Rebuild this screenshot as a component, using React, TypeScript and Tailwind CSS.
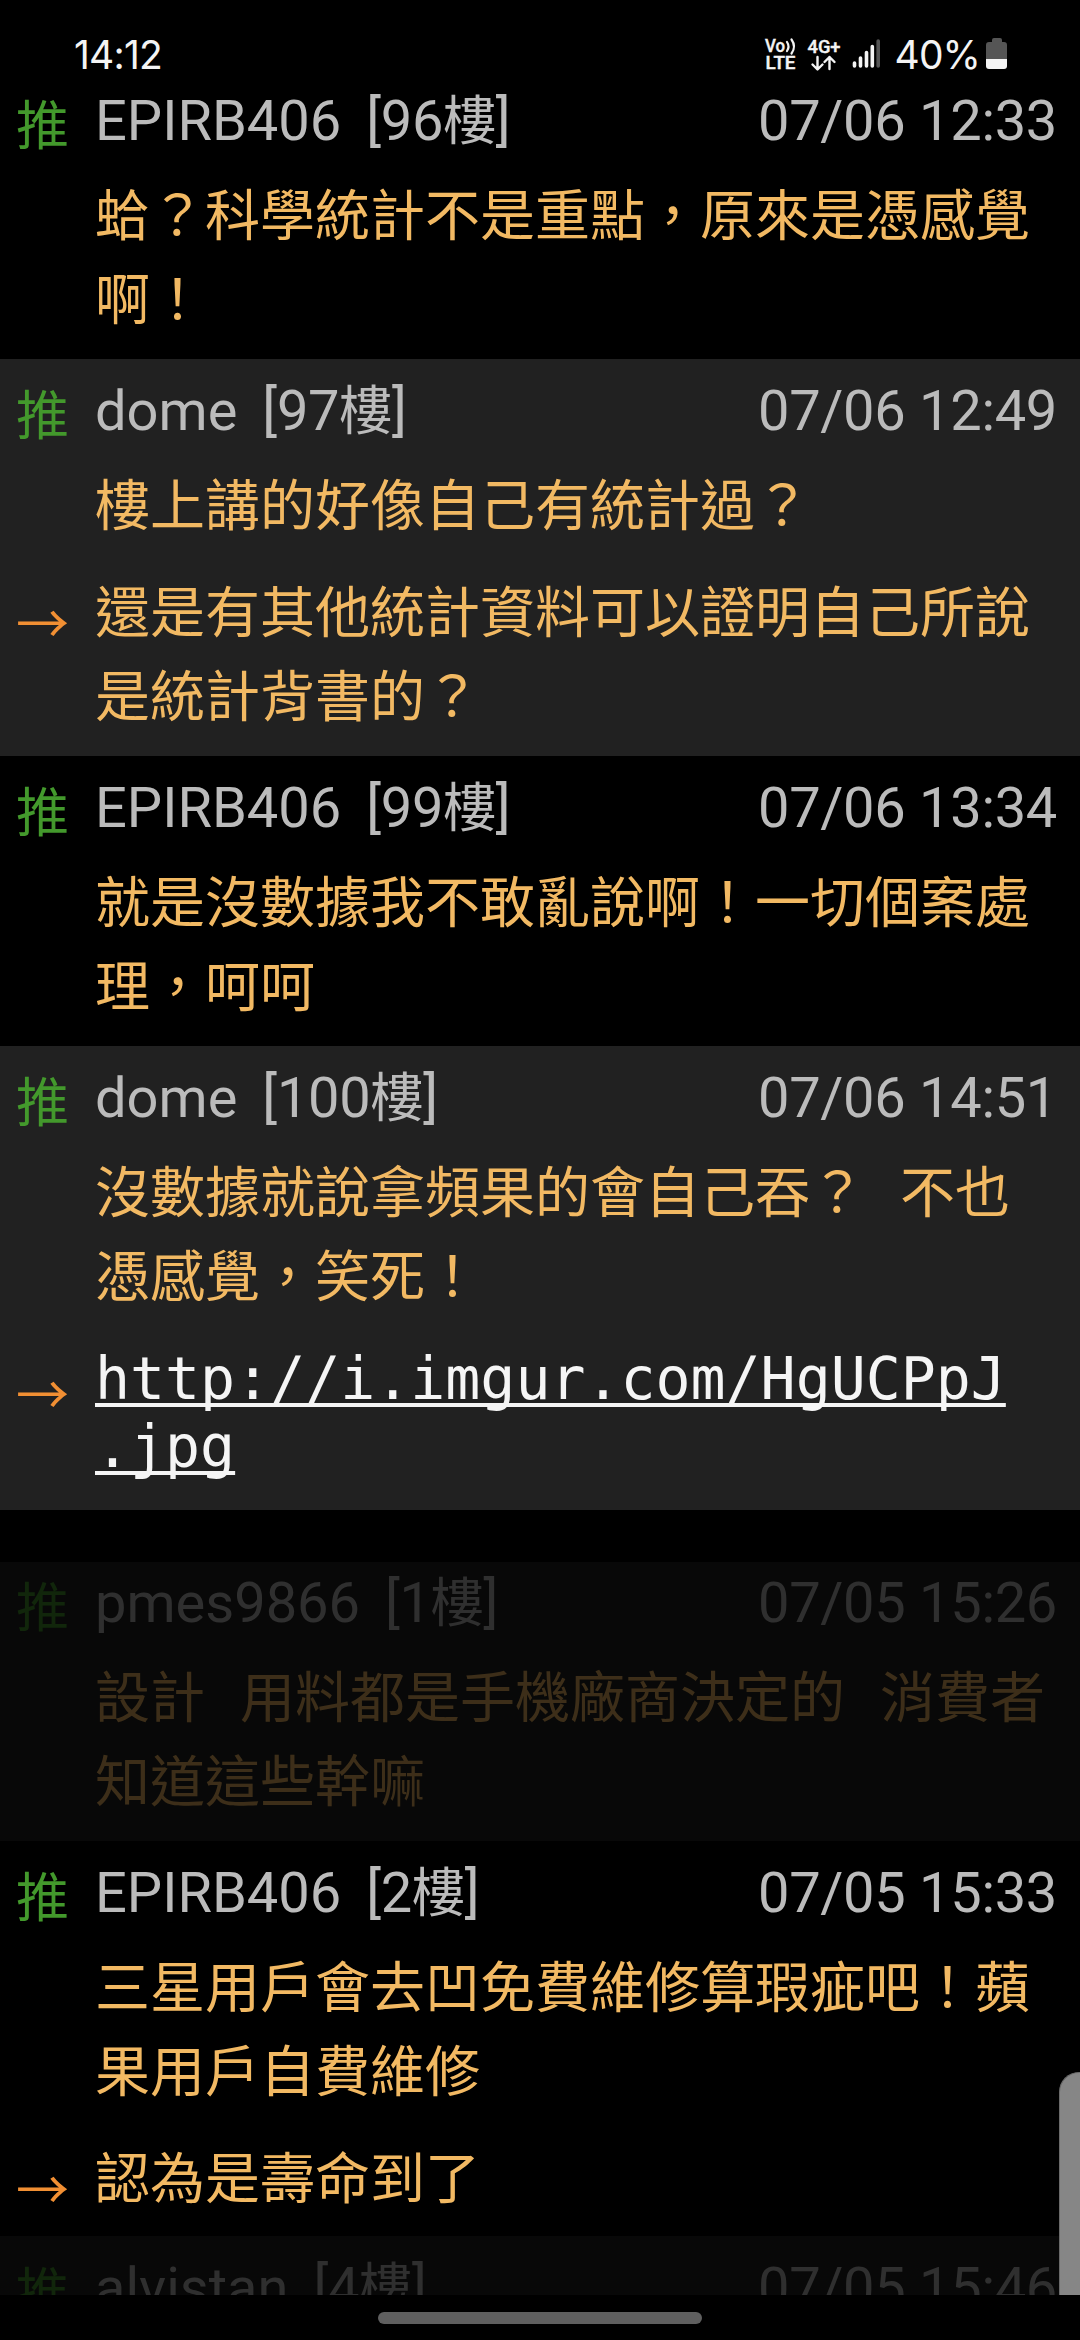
import clsx from 'clsx'

interface Message {
  lines: string[]
  link?: boolean
}

interface Comment {
  author: string
  floor: number
  time: string
  messages: Message[]
  shaded?: boolean
  faded?: boolean
}

const latest: Comment[] = [
  {
    author: 'EPIRB406',
    floor: 96,
    time: '07/06 12:33',
    messages: [{ lines: ['蛤？科學統計不是重點，原來是憑感覺', '啊！'] }],
  },
  {
    author: 'dome',
    floor: 97,
    time: '07/06 12:49',
    shaded: true,
    messages: [
      { lines: ['樓上講的好像自己有統計過？'] },
      { lines: ['還是有其他統計資料可以證明自己所說', '是統計背書的？'] },
    ],
  },
  {
    author: 'EPIRB406',
    floor: 99,
    time: '07/06 13:34',
    messages: [{ lines: ['就是沒數據我不敢亂說啊！一切個案處', '理，呵呵'] }],
  },
  {
    author: 'dome',
    floor: 100,
    time: '07/06 14:51',
    shaded: true,
    messages: [
      { lines: ['沒數據就說拿頻果的會自己吞？  不也', '憑感覺，笑死！'] },
      { lines: ['http://i.imgur.com/HgUCPpJ', '.jpg'], link: true },
    ],
  },
]

const earlier: Comment[] = [
  {
    author: 'pmes9866',
    floor: 1,
    time: '07/05 15:26',
    shaded: true,
    faded: true,
    messages: [{ lines: ['設計  用料都是手機廠商決定的  消費者', '知道這些幹嘛'] }],
  },
  {
    author: 'EPIRB406',
    floor: 2,
    time: '07/05 15:33',
    messages: [
      { lines: ['三星用戶會去凹免費維修算瑕疵吧！蘋', '果用戶自費維修'] },
      { lines: ['認為是壽命到了'] },
    ],
  },
  {
    author: 'alvistan',
    floor: 4,
    time: '07/05 15:46',
    shaded: true,
    faded: true,
    messages: [],
  },
]

function StatusBar() {
  return (
    <header className="flex h-[69px] shrink-0 items-start justify-between pl-[74px] pr-[72px] font-['Inter',sans-serif] text-[39px] leading-[39px] text-[#f4f4f4]">
      <span className="mt-[35px] tracking-[-0.8px]">14:12</span>
      <div className="flex items-start">
        <svg className="mt-[34px]" width="120" height="40" viewBox="0 0 120 40" fill="none">
          <g fill="#f4f4f4" stroke="#f4f4f4" strokeWidth="0.400" fontFamily="Roboto, sans-serif" fontWeight="500" fontSize="17.500">
            <text x="4" y="18" textLength="20" lengthAdjust="spacingAndGlyphs">Vo</text>
            <text x="4.500" y="35" textLength="30" lengthAdjust="spacingAndGlyphs">LTE</text>
            <text x="46.500" y="18.500" textLength="33" lengthAdjust="spacingAndGlyphs">4G+</text>
          </g>
          <g stroke="#f4f4f4" strokeWidth="2.200" strokeLinecap="round">
            <path d="M26 8q3 4.500 0 9M30.500 5.500q5 7 0 14" />
            <path strokeLinejoin="round" strokeWidth="2.400" d="M56.500 23v12M51.500 30.500l5 5 5-5M68.500 35V23M63.500 28l5-5 5 5" />
          </g>
          <g strokeWidth="3.600" strokeLinecap="round" stroke="#f4f4f4">
            <path d="M93.500 29v3M99.500 24v8M105.500 18.500v13.500M111.300 12.500v19.500" />
            <path stroke="#555" d="M117.200 7v25" />
          </g>
        </svg>
        <span className="ml-[14px] mt-[35px] tracking-[-0.9px]">40%</span>
        <svg className="ml-[6px] mt-[38px]" width="22" height="31" viewBox="0 0 22 31">
          <path fill="#555" d="M6 2q0-2 2-2h6q2 0 2 2v2h2q3 0 3 3v14H0V7q0-3 3-3h3z" />
          <path fill="#f4f4f4" d="M0 21h21v7q0 3-3 3H3q-3 0-3-3z" />
        </svg>
      </div>
    </header>
  )
}

function MessageRow({ message }: { message: Message }) {
  if (message.link) {
    return (
      <a className="block whitespace-pre pb-[7px] pt-[8px] font-['DejaVu_Sans_Mono',monospace] text-[58.200px] leading-[68px] text-[#f5f5f5] underline decoration-[4px] underline-offset-[4px] [text-decoration-skip-ink:none]">
        {message.lines.join('\n')}
      </a>
    )
  }
  return (
    <p className="whitespace-pre text-[55px] leading-[84px] text-[#f2b963] [word-spacing:5.200px]">
      {message.lines.join('\n')}
    </p>
  )
}

function CommentItem({ comment }: { comment: Comment }) {
  const lastMessage = comment.messages[comment.messages.length - 1]

  return (
    <article
      className={clsx(
        'shrink-0',
        lastMessage?.lines.length === 1 ? 'pb-[20px]' : 'pb-[22px]',
        comment.shaded && 'bg-[#212121]',
        comment.faded && 'opacity-25'
      )}
    >
      <div className="flex h-[100px]">
        <span className="w-[95px] shrink-0 pl-[16px] pt-[11px] text-[53px] leading-[84px] text-[#43992c]">推</span>
        <div className="flex flex-1 justify-between whitespace-pre pr-[23px] pt-[20px] font-['Roboto','Noto_Sans_CJK_TC',sans-serif] text-[56px] leading-[64px] text-[#bbb]">
          <span>
            {comment.author}
            <span className="ml-[25px] tracking-[-0.3px]">
              [{comment.floor}
              <span className="text-[53px]">樓</span>]
            </span>
          </span>
          <time className="tracking-[-0.3px]">{comment.time}</time>
        </div>
      </div>
      <div className="flex flex-col gap-[23px]">
        {comment.messages.map((message, index) => (
          <div key={index} className="flex">
            <div className="w-[95px] shrink-0 pl-[16px] pt-[26px] text-[53px] leading-[58px] text-[#f18f33]">
              {index > 0 && '→'}
            </div>
            <MessageRow message={message} />
          </div>
        ))}
      </div>
    </article>
  )
}

export default function App() {
  return (
    <div className="relative flex h-[2340px] w-[1080px] flex-col overflow-hidden bg-black font-['Noto_Sans_CJK_TC',sans-serif]">
      <StatusBar />
      <main className="flex h-[2226px] shrink-0 flex-col overflow-hidden">
        <section className="flex h-[1441px] shrink-0 flex-col overflow-hidden">
          {latest.map((comment) => (
            <CommentItem key={comment.floor} comment={comment} />
          ))}
        </section>
        {/* Divider, it hides the top edge of the first earlier comment */}
        <div className="z-10 h-[52px] shrink-0 bg-black" />
        <section className="-mt-[11px] flex flex-col">
          {earlier.map((comment) => (
            <CommentItem key={comment.floor} comment={comment} />
          ))}
        </section>
      </main>
      <div className="flex flex-1 items-start justify-center pt-[17px]">
        <div className="h-[12px] w-[324px] rounded-full bg-[#5f5f5f]" />
      </div>
      {/* Edge panel handle */}
      <div className="absolute right-0 top-[2072px] h-[223px] w-[21px] rounded-tl-[20px] border-l border-t border-[#6a6a6a] bg-[#868686]" />
    </div>
  )
}
